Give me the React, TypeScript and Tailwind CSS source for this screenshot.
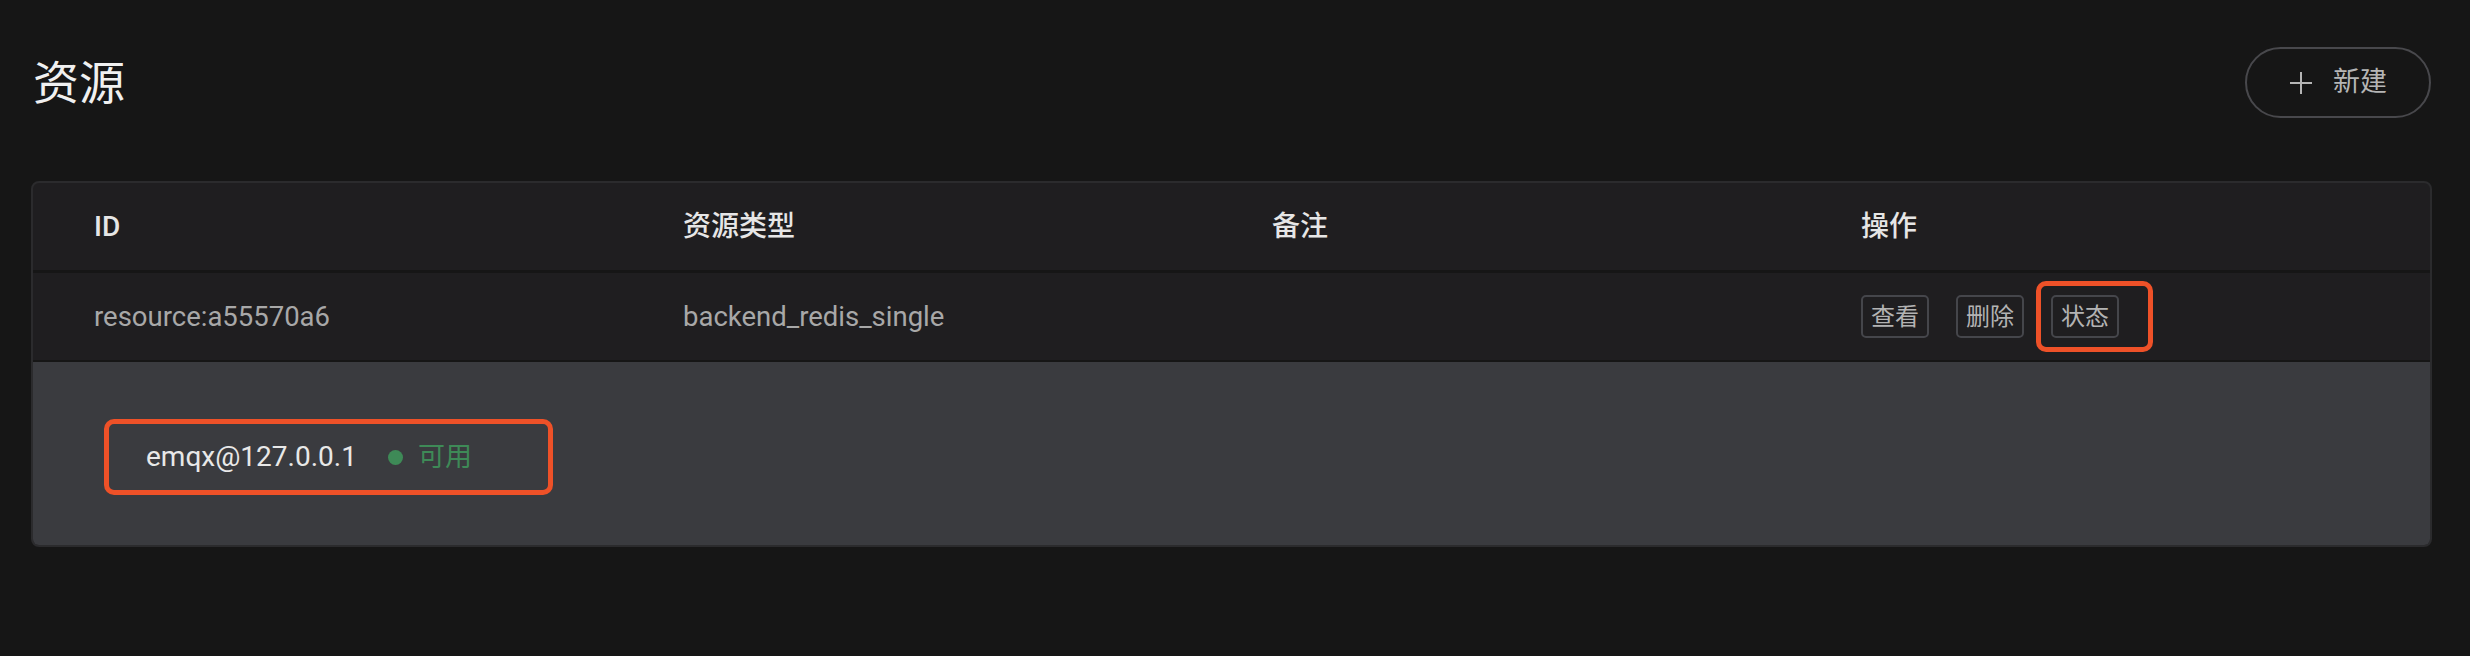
import React from "react";

const latin = { fontFamily: "Roboto, 'Noto Sans CJK SC', sans-serif" };

function ActionButton({ label }: { label: string }) {
  return (
    <button className="h-[43px] w-[68px] rounded-[5px] border-2 border-[#45464b] bg-transparent text-[24px] leading-none text-[#b3b3b3] flex items-center justify-center">
      {label}
    </button>
  );
}

export default function App() {
  return (
    <div className="h-[656px] w-full overflow-hidden bg-[#161616] pt-[47px]" style={latin}>
      {/* Page header */}
      <div className="flex h-[71px] items-center justify-between pl-[33px] pr-[39px]">
        <h1 className="text-[46px] font-normal leading-none text-[#f0f0f0]">资源</h1>
        <button className="flex h-[71px] w-[186px] items-center justify-center gap-[20px] rounded-full border-2 border-[#48484c] text-[27px] text-[#b5b5b5]">
          <svg width="24" height="24" viewBox="0 0 24 24" className="shrink-0">
            <path d="M12 1v22M1 12h22" stroke="#b5b5b5" strokeWidth="2" fill="none" />
          </svg>
          <span className="leading-none">新建</span>
        </button>
      </div>

      {/* Table card */}
      <div className="ml-[31px] mr-[38px] mt-[63px] overflow-hidden rounded-[8px] border-2 border-[#2b2b2d] bg-[#1f1e20]">
        {/* header row */}
        <div className="grid h-[87px] grid-cols-[589px_589px_589px_1fr] items-center pl-[61px] text-[28px] font-medium text-[#e6e6e6]">
          <div>ID</div>
          <div>资源类型</div>
          <div>备注</div>
          <div>操作</div>
        </div>
        <div className="h-[3px] bg-[#161616]" />
        {/* data row */}
        <div className="grid h-[87px] grid-cols-[589px_589px_589px_1fr] items-center pl-[61px] text-[27.5px] text-[#a8a8a8]">
          <div>resource:a55570a6</div>
          <div>backend_redis_single</div>
          <div></div>
          <div className="flex items-center gap-[27px]">
            <ActionButton label="查看" />
            <ActionButton label="删除" />
            <div className="relative">
              <ActionButton label="状态" />
              <div className="pointer-events-none absolute -bottom-[14px] -left-[15px] -right-[34px] -top-[14px] rounded-[10px] border-[5px] border-[#ee5128]" />
            </div>
          </div>
        </div>
        <div className="h-[2px] bg-[#161616]" />
        {/* expanded area */}
        <div className="bg-[#3a3b3f] pb-[50px] pl-[71px] pt-[57px]">
          <div className="inline-flex h-[76px] w-[449px] items-center rounded-[10px] border-[5px] border-[#ee5128] pl-[37px]">
            <span className="text-[28px] leading-none text-[#e8e8e8]">emqx@127.0.0.1</span>
            <span className="ml-[31px] inline-block h-[15px] w-[15px] rounded-full bg-[#3e8a57]" />
            <span className="ml-[15px] text-[27px] leading-none text-[#3e8a57]">可用</span>
          </div>
        </div>
      </div>
    </div>
  );
}
